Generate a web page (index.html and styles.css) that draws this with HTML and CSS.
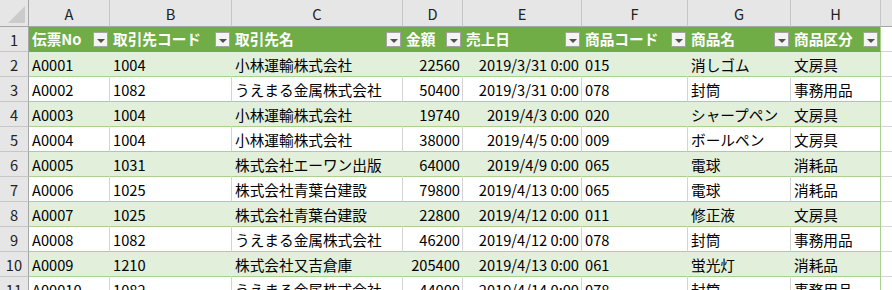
FILE: index.html
```html
<!DOCTYPE html>
<html lang="ja">
<head>
<meta charset="utf-8">
<link rel="stylesheet" href="styles.css">
</head>
<body>
<div class="sheet">
  <div class="ch corner"><span class="tri"></span></div>
  <div class="ch">A</div><div class="ch">B</div><div class="ch">C</div><div class="ch">D</div><div class="ch">E</div><div class="ch">F</div><div class="ch">G</div><div class="ch">H</div><div class="ch last"></div>

  <div class="rh">1</div>
  <div class="th"><span>伝票No</span><span class="fb"></span></div>
  <div class="th"><span>取引先コード</span><span class="fb"></span></div>
  <div class="th"><span>取引先名</span><span class="fb"></span></div>
  <div class="th"><span>金額</span><span class="fb"></span></div>
  <div class="th"><span>売上日</span><span class="fb"></span></div>
  <div class="th"><span>商品コード</span><span class="fb"></span></div>
  <div class="th"><span>商品名</span><span class="fb"></span></div>
  <div class="th end"><span>商品区分</span><span class="fb"></span></div>
  <div class="x"></div>

  <div class="rh">2</div>
  <div class="c g">A0001</div><div class="c g">1004</div><div class="c g">小林運輸株式会社</div><div class="c g n">22560</div><div class="c g n">2019/3/31 0:00</div><div class="c g">015</div><div class="c g">消しゴム</div><div class="c g end">文房具</div><div class="x"></div>

  <div class="rh">3</div>
  <div class="c">A0002</div><div class="c">1082</div><div class="c">うえまる金属株式会社</div><div class="c n">50400</div><div class="c n">2019/3/31 0:00</div><div class="c">078</div><div class="c">封筒</div><div class="c end">事務用品</div><div class="x"></div>

  <div class="rh">4</div>
  <div class="c g">A0003</div><div class="c g">1004</div><div class="c g">小林運輸株式会社</div><div class="c g n">19740</div><div class="c g n">2019/4/3 0:00</div><div class="c g">020</div><div class="c g">シャープペン</div><div class="c g end">文房具</div><div class="x"></div>

  <div class="rh">5</div>
  <div class="c">A0004</div><div class="c">1004</div><div class="c">小林運輸株式会社</div><div class="c n">38000</div><div class="c n">2019/4/5 0:00</div><div class="c">009</div><div class="c">ボールペン</div><div class="c end">文房具</div><div class="x"></div>

  <div class="rh">6</div>
  <div class="c g">A0005</div><div class="c g">1031</div><div class="c g">株式会社エーワン出版</div><div class="c g n">64000</div><div class="c g n">2019/4/9 0:00</div><div class="c g">065</div><div class="c g">電球</div><div class="c g end">消耗品</div><div class="x"></div>

  <div class="rh">7</div>
  <div class="c">A0006</div><div class="c">1025</div><div class="c">株式会社青葉台建設</div><div class="c n">79800</div><div class="c n">2019/4/13 0:00</div><div class="c">065</div><div class="c">電球</div><div class="c end">消耗品</div><div class="x"></div>

  <div class="rh">8</div>
  <div class="c g">A0007</div><div class="c g">1025</div><div class="c g">株式会社青葉台建設</div><div class="c g n">22800</div><div class="c g n">2019/4/12 0:00</div><div class="c g">011</div><div class="c g">修正液</div><div class="c g end">文房具</div><div class="x"></div>

  <div class="rh">9</div>
  <div class="c">A0008</div><div class="c">1082</div><div class="c">うえまる金属株式会社</div><div class="c n">46200</div><div class="c n">2019/4/12 0:00</div><div class="c">078</div><div class="c">封筒</div><div class="c end">事務用品</div><div class="x"></div>

  <div class="rh">10</div>
  <div class="c g">A0009</div><div class="c g">1210</div><div class="c g">株式会社又吉倉庫</div><div class="c g n">205400</div><div class="c g n">2019/4/13 0:00</div><div class="c g">061</div><div class="c g">蛍光灯</div><div class="c g end">消耗品</div><div class="x"></div>

  <div class="rh">11</div>
  <div class="c">A00010</div><div class="c">1082</div><div class="c">うえまる金属株式会社</div><div class="c n">44000</div><div class="c n">2019/4/14 0:00</div><div class="c">078</div><div class="c">封筒</div><div class="c end">事務用品</div><div class="x"></div>
</div>
</body>
</html>
```

FILE: styles.css
```css
html, body {
  margin: 0;
  padding: 0;
  background: #ffffff;
  overflow: hidden;
}

.sheet {
  display: grid;
  grid-template-columns: 29px 81px 122px 171px 60px 119px 106px 103px 90px 1fr;
  grid-template-rows: 27px;
  grid-auto-rows: 25px;
  width: 892px;
  height: 290px;
  overflow: hidden;
  font-family: "Noto Sans CJK JP", sans-serif;
  font-size: 14.67px;
  line-height: 18px;
  color: #000;
}

.sheet > div {
  box-sizing: border-box;
  white-space: nowrap;
  overflow: hidden;
}

.ch {
  background: #e6e6e6;
  border-right: 1px solid #c6c6c6;
  border-bottom: 1px solid #a6a6a6;
  display: flex;
  align-items: center;
  justify-content: center;
  color: #222;
  padding-top: 1px;
}

.ch.last {
  border-right: none;
}

.corner {
  border-right: 1px solid #a6a6a6;
  align-items: flex-end;
  justify-content: flex-end;
  padding: 0 3px 3px 0;
}

.tri {
  width: 0;
  height: 0;
  border-left: 17px solid transparent;
  border-bottom: 17px solid #cbcbcb;
}

.rh {
  background: #e6e6e6;
  border-right: 1px solid #a6a6a6;
  border-bottom: 1px solid #c6c6c6;
  display: flex;
  align-items: center;
  justify-content: center;
  color: #222;
  padding-top: 1px;
}

.th {
  background: #70ad47;
  color: #fff;
  font-weight: bold;
  display: flex;
  align-items: center;
  padding: 0 2px 0 3px;
  border-bottom: 1px solid #70ad47;
}

.th.end {
  border-right: 1px solid #a9d08e;
}

.fb {
  margin-left: auto;
  flex: none;
  width: 15px;
  height: 15px;
  box-sizing: border-box;
  border: 1px solid #a3a3a3;
  background: #f4f4f4;
  display: flex;
  align-items: center;
  justify-content: center;
  margin-top: 1px;
}

.fb::after {
  content: "";
  width: 0;
  height: 0;
  border-left: 4px solid transparent;
  border-right: 4px solid transparent;
  border-top: 4px solid #505050;
  margin-top: 2px;
}

.c {
  background: #ffffff;
  border-right: 1px solid #d4d4d4;
  border-bottom: 1px solid #a9d08e;
  display: flex;
  align-items: center;
  padding: 1px 3px 0 3px;
}

.c.g {
  background: #e2efda;
  border-right-color: #e2efda;
}

.c.end {
  border-right: 1px solid #a9d08e;
}

.c.n {
  justify-content: flex-end;
  padding-right: 2px;
}

.x {
  background: #ffffff;
  border-bottom: 1px solid #d4d4d4;
}
```
